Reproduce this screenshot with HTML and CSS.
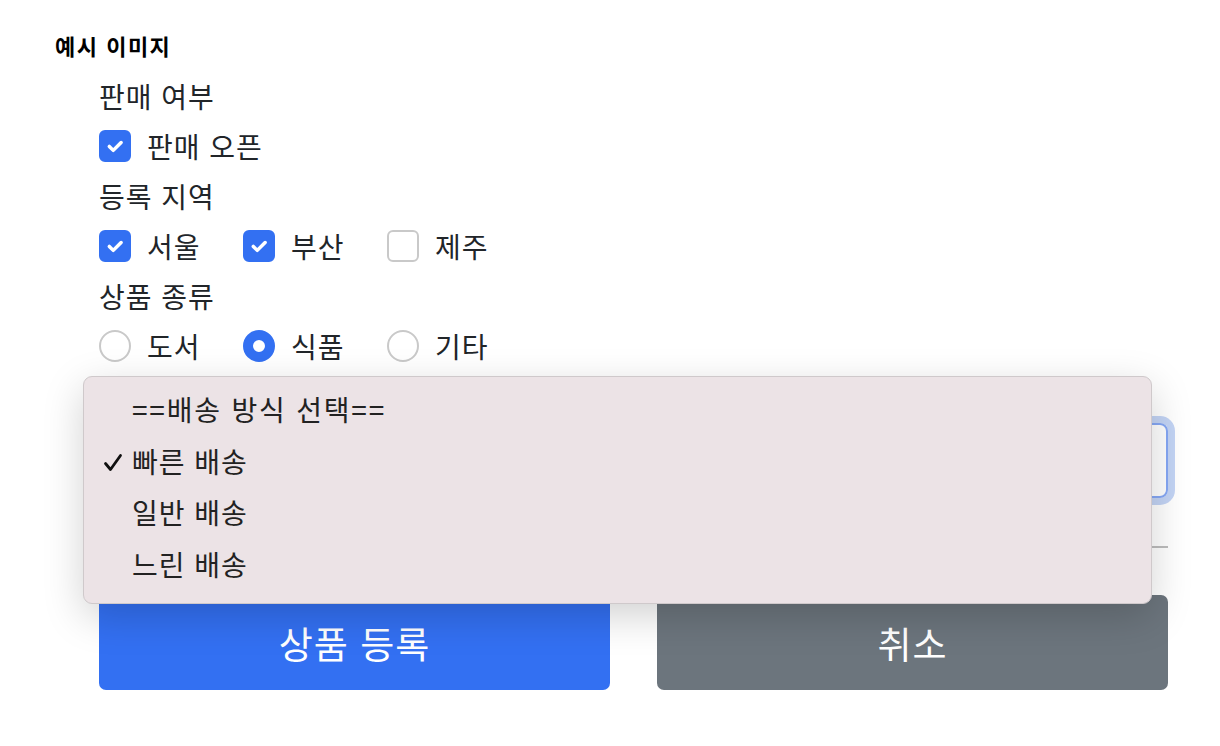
FILE: index.html
```html
<!DOCTYPE html>
<html lang="ko">
	<head>
		<meta charset="utf-8" />
		<title>예시 이미지</title>
		<link rel="stylesheet" href="styles.css">
	</head>
	<body>
		<h4 class="title">예시 이미지</h4>
		<form class="form">
			<div class="label">판매 여부</div>
			<div class="row">
				<label class="check">
					<span class="box on"><svg viewBox="0 0 32 32"><path d="M9.5 16.5l4.5 4.5 9-9" /></svg></span>
					판매 오픈
				</label>
			</div>

			<div class="label">등록 지역</div>
			<div class="row">
				<label class="check">
					<span class="box on"><svg viewBox="0 0 32 32"><path d="M9.5 16.5l4.5 4.5 9-9" /></svg></span>
					서울
				</label>
				<label class="check">
					<span class="box on"><svg viewBox="0 0 32 32"><path d="M9.5 16.5l4.5 4.5 9-9" /></svg></span>
					부산
				</label>
				<label class="check">
					<span class="box"></span>
					제주
				</label>
			</div>

			<div class="label">상품 종류</div>
			<div class="row">
				<label class="check">
					<span class="radio"></span>
					도서
				</label>
				<label class="check">
					<span class="radio on"></span>
					식품
				</label>
				<label class="check">
					<span class="radio"></span>
					기타
				</label>
			</div>

			<div class="select-wrap">
				<!-- select box, covered by the open option list -->
				<div class="select"></div>
				<ul class="options">
					<li class="head">==배송 방식 선택==</li>
					<li class="sel"><svg class="tick" viewBox="0 0 20 20"><path d="M2.5 10.5l5 6 10-14" /></svg><span>빠른 배송</span></li>
					<li>일반 배송</li>
					<li>느린 배송</li>
				</ul>
			</div>

			<hr class="line">

			<div class="buttons">
				<button type="button" class="btn primary">상품 등록</button>
				<button type="button" class="btn secondary">취소</button>
			</div>
		</form>
	</body>
</html>
```

FILE: styles.css
```css
body,ul,li{
	margin: 0;
	padding: 0;
}
li{
	list-style: none;
}
body{
	font-family: "Noto Sans CJK KR", "Noto Sans", sans-serif;
	color: #212529;
	background: #fff;
	width: 1220px;
	height: 746px;
	overflow: hidden;
}
.title{
	margin: 0;
	padding: 29px 0 0 55px;
	height: 32px;
	line-height: 32px;
	font-size: 22px;
	letter-spacing: 1.5px;
	font-weight: 700;
	color: #000;
}
.form{
	padding: 10px 52px 0 99px;
}
.label{
	height: 50px;
	line-height: 50px;
	font-size: 28px;
	letter-spacing: 1px;
}
.row{
	display: flex;
	height: 50px;
	align-items: center;
}
.check{
	display: flex;
	align-items: center;
	min-width: 144px;
	font-size: 28px;
	letter-spacing: 1px;
	white-space: nowrap;
}
.box,
.radio{
	width: 32px;
	height: 32px;
	box-sizing: border-box;
	border: 2px solid #c9c9c9;
	border-radius: 6px;
	margin-right: 16px;
	display: flex;
	align-items: center;
	justify-content: center;
	flex: none;
}
.box.on{
	background: #3370f2;
	border-color: #3370f2;
}
.box svg{
	width: 32px;
	height: 32px;
}
.box path{
	fill: none;
	stroke: #fff;
	stroke-width: 4;
	stroke-linecap: round;
	stroke-linejoin: round;
}
.radio{
	border-radius: 50%;
}
.radio.on{
	border: 10px solid #3370f2;
	background: #fff;
}
.select-wrap{
	position: relative;
	padding-top: 52px;
}
.select{
	height: 75px;
	box-sizing: border-box;
	border: 2px solid #86a8f5;
	border-radius: 8px;
	box-shadow: 0 0 0 7px #c3d4f5;
}
.options{
	position: absolute;
	left: -16px;
	top: 5px;
	width: 1069px;
	height: 228px;
	box-sizing: border-box;
	padding-top: 7px;
	background: #ece3e6;
	border: 1px solid #cfc9cb;
	border-radius: 9px;
	box-shadow: 0 12px 40px rgba(0,0,0,0.18);
	font-size: 28px;
	letter-spacing: 1px;
	color: #222;
	z-index: 2;
}
.options li{
	position: relative;
	height: 51.5px;
	line-height: 51.5px;
	padding-left: 48px;
}
.options .head{
	letter-spacing: 1.8px;
}
.tick{
	position: absolute;
	left: 19px;
	top: 17px;
	width: 20px;
	height: 20px;
}
.tick path{
	fill: none;
	stroke: #111;
	stroke-width: 2.8;
	stroke-linecap: round;
	stroke-linejoin: round;
}
.line{
	margin: 48px 0 0;
	border: 0;
	border-top: 2px solid #bdbdbd;
}
.buttons{
	display: flex;
	justify-content: space-between;
	margin-top: 47px;
}
.btn{
	width: 511px;
	height: 95px;
	border: 0;
	border-radius: 7px;
	color: #fff;
	font-family: "Noto Sans CJK KR", "Noto Sans", sans-serif;
	font-size: 37px;
	letter-spacing: 1px;
}
.primary{
	background: #3370f2;
}
.secondary{
	background: #6c757d;
}
```
